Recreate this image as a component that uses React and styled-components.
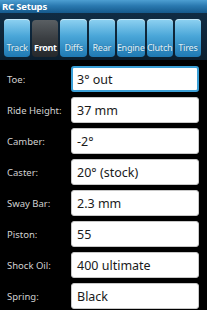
import React from 'react';
import styled, { createGlobalStyle } from 'styled-components';

const tabs = ['Track', 'Front', 'Diffs', 'Rear', 'Engine', 'Clutch', 'Tires'];

const fields = [
  { label: 'Toe:', value: '3° out', focused: true },
  { label: 'Ride Height:', value: '37 mm' },
  { label: 'Camber:', value: '-2°' },
  { label: 'Caster:', value: '20° (stock)' },
  { label: 'Sway Bar:', value: '2.3 mm' },
  { label: 'Piston:', value: '55' },
  { label: 'Shock Oil:', value: '400 ultimate' },
  { label: 'Spring:', value: 'Black' },
];

function App() {
  return (
    <>
      <GlobalStyle />
      <Screen>
        <TitleBar>RC Setups</TitleBar>
        <TabBand>
          {tabs.map((t) => (
            <Tab key={t} $active={t === 'Front'}>
              {t}
            </Tab>
          ))}
        </TabBand>
        <Form>
          {fields.map((f) => (
            <Row key={f.label}>
              <Label>{f.label}</Label>
              <Field $focused={f.focused}>{f.value}</Field>
            </Row>
          ))}
        </Form>
      </Screen>
    </>
  );
}

const GlobalStyle = createGlobalStyle`
  html, body {
    margin: 0;
    padding: 0;
    background: #000;
  }
  body {
    font-family: 'Noto Sans', 'DejaVu Sans', sans-serif;
  }
`;

const Screen = styled.div`
  width: 207px;
  height: 310px;
  background: #000;
  overflow: hidden;
`;

const TitleBar = styled.div`
  height: 13px;
  padding-left: 2px;
  display: flex;
  align-items: center;
  font-size: 9.5px;
  font-weight: 700;
  color: #fff;
  background: linear-gradient(#4d9fd2 0%, #2a79b0 45%, #15598c 100%);
  letter-spacing: -0.2px;
`;

const TabBand = styled.div`
  display: flex;
  gap: 2px;
  height: 47px;
  padding: 6px 6px 3px 4px;
  box-sizing: border-box;
  background: linear-gradient(#102c43, #0b1e2e);
`;

const Tab = styled.div`
  flex: 1;
  display: flex;
  align-items: flex-end;
  justify-content: center;
  padding-bottom: 3px;
  border-radius: 4px;
  font-size: 9px;
  font-weight: ${(p) => (p.$active ? 700 : 500)};
  color: ${(p) => (p.$active ? '#fff' : '#d4ecf8')};
  letter-spacing: -0.3px;
  white-space: nowrap;
  margin-top: ${(p) => (p.$active ? '1px' : '0')};
  background: ${(p) =>
    p.$active
      ? 'linear-gradient(#5a5f63 0%, #3a3e42 50%, #25282b 100%)'
      : 'linear-gradient(#8fd2f2 0%, #4aa6d8 45%, #1f79b3 100%)'};
  box-shadow: ${(p) =>
    p.$active ? 'none' : 'inset 0 1px 0 rgba(255,255,255,0.5)'};
  text-shadow: 0 0 1px rgba(0, 40, 80, 0.6);
`;

const Form = styled.div`
  display: flex;
  flex-direction: column;
  gap: 5px;
  padding: 6px 8px 0 7px;
`;

const Row = styled.div`
  display: grid;
  grid-template-columns: 64px 128px;
  align-items: center;
  height: 26px;
`;

const Label = styled.div`
  font-size: 9.5px;
  color: #d2d2d2;
  white-space: nowrap;
`;

const Field = styled.div`
  height: 26px;
  box-sizing: border-box;
  display: flex;
  align-items: center;
  padding-left: ${(p) => (p.$focused ? '4px' : '5px')};
  border-radius: 3px;
  background: #fff;
  border: ${(p) => (p.$focused ? '2px solid #3a9fd6' : '1px solid #c8c8c8')};
  font-size: 12.5px;
  color: #1a1a1a;
  white-space: nowrap;
`;

export default App;
